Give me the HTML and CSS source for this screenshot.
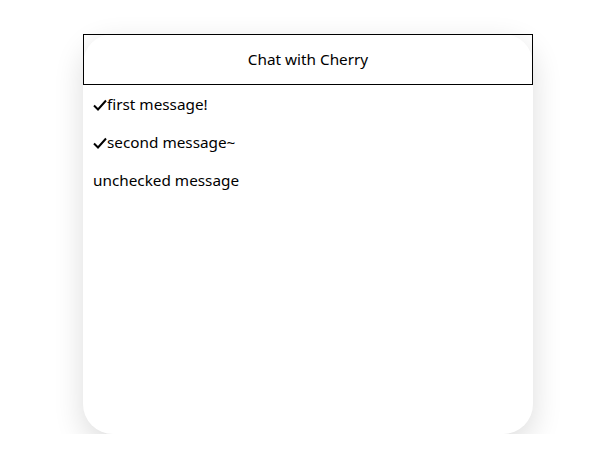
FILE: index.html
```html
<!doctype html>
<html>
<head>
<title>Chat with Cherry</title>
<link rel="stylesheet" href="styles.css">
</head>
<body>
<div class="chat">
    <div class="chat-title">Chat with Cherry</div>
    <div class="messages">
        <div class="msg"><svg class="check" width="14" height="12" viewBox="0 0 14 12"><path d="M1 6.5 L5 10.5 L13 1.5" fill="none" stroke="#000" stroke-width="2"/></svg>first message!</div>
        <div class="msg"><svg class="check" width="14" height="12" viewBox="0 0 14 12"><path d="M1 6.5 L5 10.5 L13 1.5" fill="none" stroke="#000" stroke-width="2"/></svg>second message~</div>
        <div class="msg">unchecked message</div>
    </div>
</div>
</body>
</html>
```
FILE: styles.css
```css
html,body{
    margin: 0;
    background-color: #fff;
}
body{
    padding: 34px 0 0 83px;
    font-family: "Noto Sans", "DejaVu Sans", sans-serif;
    font-size: 15.3px;
    color: #000;
}
.chat{
    width: 450px;
    height: 400px;
    background-color: #fff;
    border-radius: 30px;
    box-shadow: 0 10px 30px rgba(0,0,0,.14);
}
.chat-title{
    border: 1px solid #000;
    height: 49px;
    line-height: 49px;
    text-align: center;
}
.msg{
    padding: 9px 10px;
    line-height: 20px;
}
.check{
    vertical-align: -1px;
}
```
